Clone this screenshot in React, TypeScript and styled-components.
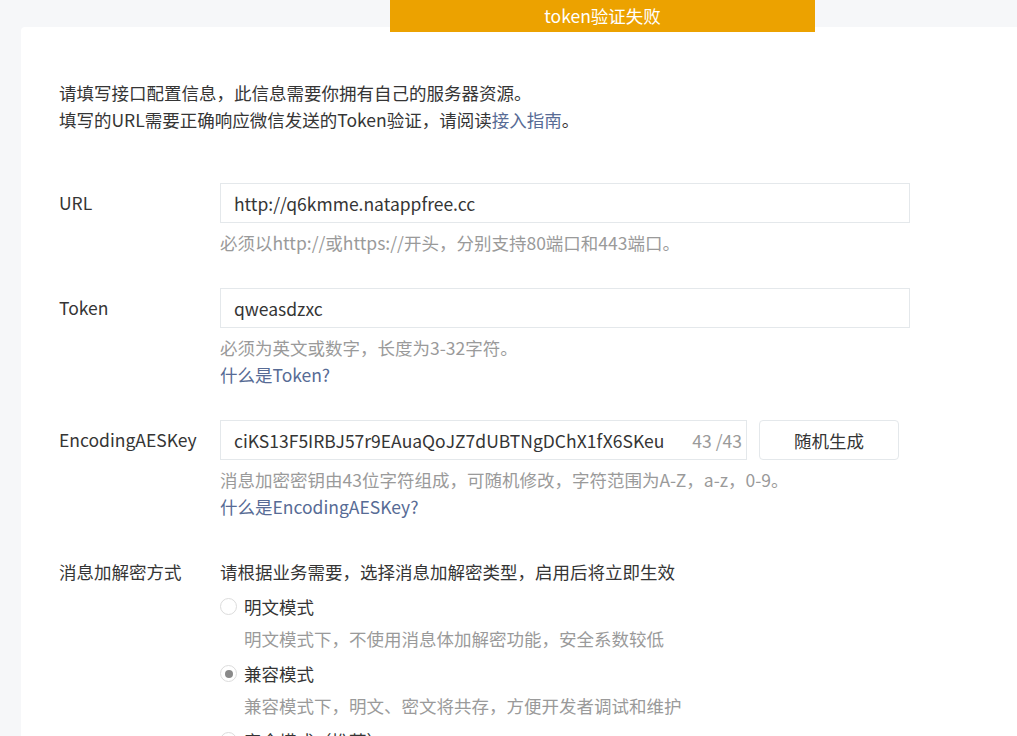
import styled, { createGlobalStyle } from "styled-components";

const GlobalStyle = createGlobalStyle`
	html, body {
		margin: 0;
		padding: 0;
		background-color: #f6f7f9;
		font-family: "Noto Sans CJK SC", "Noto Sans", sans-serif;
		color: #353535;
	}
`;

const Page = styled.div`
	position: relative;
	height: 736px;
	overflow: hidden;
	padding: 27px 0 0 21px;
	box-sizing: border-box;
`;
const Toast = styled.div`
	position: absolute;
	top: 0;
	left: 390px;
	width: 425px;
	height: 32px;
	background-color: #eca200;
	color: #fff;
	font-size: 17.5px;
	line-height: 32px;
	text-align: center;
	z-index: 2;
`;
const Card = styled.div`
	background-color: #fff;
	border-radius: 4px 0 0 0;
	min-height: 800px;
	padding: 52px 38px 0;
	font-size: 17.5px;
`;
const Intro = styled.div`
	line-height: 27px;
	margin-bottom: 50px;
`;
const Link = styled.a`
	color: #576b95;
	text-decoration: none;
	cursor: pointer;
`;
const Row = styled.div<{ top?: number }>`
	display: grid;
	grid-template-columns: 161px 1fr;
	padding-top: ${(props) => props.top ?? 0}px;
	margin-bottom: 32px;
`;
const Label = styled.div<{ lh: number }>`
	line-height: ${(props) => props.lh}px;
`;
const Field = styled.div`
	display: flex;
	flex-direction: column;
`;
const InputLine = styled.div`
	display: flex;
	gap: 12px;
`;
const InputBox = styled.div<{ w: number }>`
	display: flex;
	align-items: center;
	width: ${(props) => props.w}px;
	height: 40px;
	box-sizing: border-box;
	border: 1px solid #e4e8eb;
	padding: 0 4px 0 13px;
	background: #fff;
`;
const Input = styled.input`
	flex: 1;
	min-width: 0;
	border: none;
	outline: none;
	padding: 0;
	font: inherit;
	font-size: 17.5px;
	color: #353535;
	background: transparent;
`;
const Counter = styled.span`
	color: #9a9a9a;
	white-space: nowrap;
	padding-left: 2px;
`;
const Button = styled.button`
	width: 140px;
	height: 40px;
	border: 1px solid #e4e8eb;
	border-radius: 4px;
	background: #fff;
	font: inherit;
	font-size: 17.5px;
	color: #353535;
	cursor: pointer;
`;
const Hint = styled.div<{ gap?: number }>`
	color: #9a9a9a;
	line-height: 27px;
	margin-top: ${(props) => props.gap ?? 0}px;
`;
const Text = styled.div`
	line-height: 27px;
`;
const Option = styled.label`
	display: flex;
	align-items: center;
	gap: 7px;
	line-height: 27px;
	margin-top: 8px;
	cursor: pointer;
`;
const Radio = styled.span<{ checked?: boolean }>`
	position: relative;
	width: 17px;
	height: 17px;
	box-sizing: border-box;
	border-radius: 50%;
	border: 1px solid #dcdcdc;
	background: #fff;
	&::after {
		content: "";
		display: ${(props) => (props.checked ? "block" : "none")};
		position: absolute;
		top: 3.5px;
		left: 3.5px;
		width: 8px;
		height: 8px;
		border-radius: 50%;
		background: #8a8a8a;
	}
`;
const OptionDesc = styled.div`
	color: #9a9a9a;
	line-height: 27px;
	margin-top: 5px;
	padding-left: 24px;
`;

const modes = [
	{ name: "明文模式", desc: "明文模式下，不使用消息体加解密功能，安全系数较低" },
	{ name: "兼容模式", desc: "兼容模式下，明文、密文将共存，方便开发者调试和维护", checked: true },
	{ name: "安全模式（推荐）", desc: "安全模式下，消息包为纯密文，需要开发者加密和解密，安全系数高" },
];

export default function App() {
	const aesKey = "ciKS13F5IRBJ57r9EAuaQoJZ7dUBTNgDChX1fX6SKeu";
	return (
		<>
			<GlobalStyle />
			<Page>
				<Toast>token验证失败</Toast>
				<Card>
					<Intro>
						<div>请填写接口配置信息，此信息需要你拥有自己的服务器资源。</div>
						<div>
							填写的URL需要正确响应微信发送的Token验证，请阅读<Link>接入指南</Link>。
						</div>
					</Intro>
					<Row>
						<Label lh={40}>URL</Label>
						<Field>
							<InputBox w={690}>
								<Input defaultValue="http://q6kmme.natappfree.cc" />
							</InputBox>
							<Hint gap={6}>必须以http://或https://开头，分别支持80端口和443端口。</Hint>
						</Field>
					</Row>
					<Row>
						<Label lh={40}>Token</Label>
						<Field>
							<InputBox w={690}>
								<Input defaultValue="qweasdzxc" />
							</InputBox>
							<Hint gap={6}>必须为英文或数字，长度为3-32字符。</Hint>
							<Text>
								<Link>什么是Token?</Link>
							</Text>
						</Field>
					</Row>
					<Row>
						<Label lh={40}>EncodingAESKey</Label>
						<Field>
							<InputLine>
								<InputBox w={527}>
									<Input defaultValue={aesKey} />
									<Counter>{aesKey.length} /43</Counter>
								</InputBox>
								<Button>随机生成</Button>
							</InputLine>
							<Hint gap={6}>消息加密密钥由43位字符组成，可随机修改，字符范围为A-Z，a-z，0-9。</Hint>
							<Text>
								<Link>什么是EncodingAESKey?</Link>
							</Text>
						</Field>
					</Row>
					<Row top={6}>
						<Label lh={27}>消息加解密方式</Label>
						<Field>
							<Text>请根据业务需要，选择消息加解密类型，启用后将立即生效</Text>
							{modes.map((m) => (
								<div key={m.name}>
									<Option>
										<Radio checked={m.checked} />
										{m.name}
									</Option>
									<OptionDesc>{m.desc}</OptionDesc>
								</div>
							))}
						</Field>
					</Row>
				</Card>
			</Page>
		</>
	);
}
